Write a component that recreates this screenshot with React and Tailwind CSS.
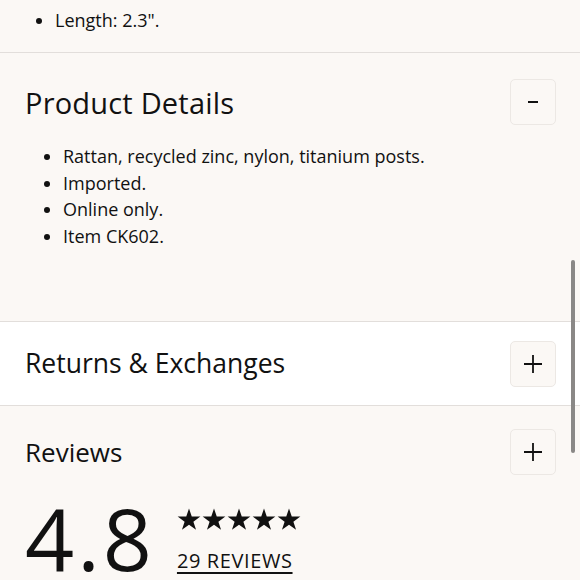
import React from 'react';

const font = { fontFamily: '"Open Sans", "Noto Sans", sans-serif' };

const Toggle = ({ open }) => (
  <button
    type="button"
    className="w-[46px] h-[46px] flex items-center justify-center rounded-[5px] border border-[#ece8e4] bg-[#fbf8f5]"
  >
    {open ? (
      <span className="block w-[10px] h-[2px] bg-[#111]" />
    ) : (
      <svg width="20" height="20" viewBox="0 0 20 20">
        <path d="M10 1v18M1 10h18" stroke="#111" strokeWidth="1.8" />
      </svg>
    )}
  </button>
);

const Star = () => (
  <svg width="24" height="23" viewBox="0 0 24 23">
    <path d="M12 0.5l2.75 8.1h8.6l-6.95 5.05 2.65 8.15L12 16.75l-7.05 5.05 2.65-8.15L0.65 8.6h8.6z" fill="#111" />
  </svg>
);

export default function App() {
  return (
    <div className="relative w-[580px] h-[580px] overflow-hidden bg-[#fbf8f5] text-[#111]" style={font}>
      <ul className="pl-[55px] pt-[7px] h-[53px] border-b border-[#e2dedb] text-[18px]">
        <li className="list-disc">Length: 2.3".</li>
      </ul>

      <section className="h-[269px] border-b border-[#e2dedb]">
        <div className="flex items-center justify-between pl-[25px] pr-[24px] pt-[26px]">
          <h2 className="text-[29px] leading-none tracking-[0.2px]">Product Details</h2>
          <Toggle open />
        </div>
        <ul className="pl-[63px] mt-[18px] text-[18px] leading-[26.5px]">
          <li className="list-disc">Rattan, recycled zinc, nylon, titanium posts.</li>
          <li className="list-disc">Imported.</li>
          <li className="list-disc">Online only.</li>
          <li className="list-disc">Item CK602.</li>
        </ul>
      </section>

      <section className="h-[84px] bg-white border-b border-[#e2dedb] flex items-center justify-between pl-[25px] pr-[24px]">
        <h2 className="text-[26.5px] leading-none">Returns &amp; Exchanges</h2>
        <Toggle />
      </section>

      <section className="pt-[23px] pl-[25px] pr-[24px]">
        <div className="flex items-center justify-between">
          <h2 className="text-[26px] leading-none">Reviews</h2>
          <Toggle />
        </div>
        <div className="flex items-start gap-[22px] mt-[20px]">
          <div className="text-[86px] leading-none tracking-[3px]">4.8</div>
          <div className="flex flex-col">
            <div className="flex gap-[1px] mt-[13px]">
              <Star /><Star /><Star /><Star /><Star />
            </div>
            <a href="#" className="mt-[15px] text-[20px] tracking-[0.6px] underline underline-offset-4">29 REVIEWS</a>
          </div>
        </div>
      </section>

      <div className="absolute right-[5px] top-[260px] w-[4px] h-[193px] rounded-full bg-[#8a8886]" />
    </div>
  );
}
